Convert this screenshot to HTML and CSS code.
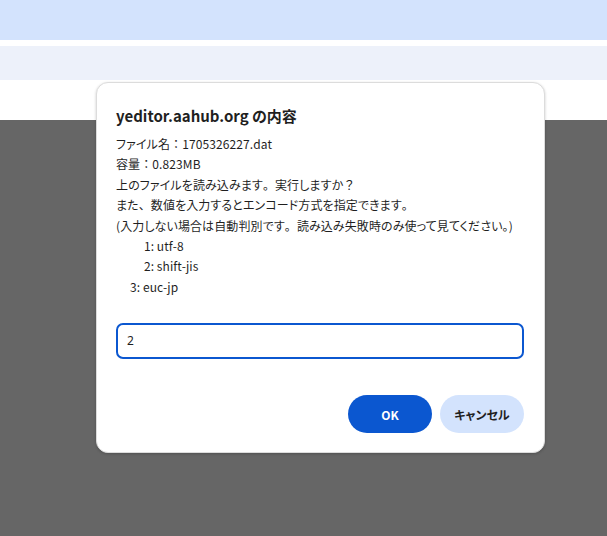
FILE: index.html
```html
<!DOCTYPE html>
<html lang="ja">
<head>
<meta charset="utf-8">
<link rel="stylesheet" href="styles.css">
</head>
<body>
<div class="page">
  <div class="bar-top"></div>
  <div class="bar-gap"></div>
  <div class="bar-second"></div>
  <div class="bar-white"></div>
  <div class="shade"></div>
</div>
<div class="dialog">
  <div class="title">yeditor.aahub.org の内容</div>
  <div class="message">ファイル名<span class="fw">：</span>1705326227.dat
容量<span class="fw">：</span>0.823MB
上のファイルを読み込みます<span class="fw">。</span>実行しますか<span class="fw">？</span>
また<span class="fw">、</span>数値を入力するとエンコード方式を指定できます<span class="fw">。</span>
(入力しない場合は自動判別です<span class="fw">。</span>読み込み失敗時のみ使って見てください<span class="fw">。</span>)
          1: utf-8
          2: shift-jis
     3: euc-jp</div>
  <div class="input">2</div>
  <div class="buttons">
    <div class="btn btn-ok">OK</div>
    <div class="btn btn-cancel">キャンセル</div>
  </div>
</div>
</body>
</html>
```
FILE: styles.css
```css
html, body {
  margin: 0;
  padding: 0;
  height: 100%;
}
body {
  font-family: "Noto Sans CJK JP", "Noto Sans", sans-serif;
  color: #1f1f1f;
}
.page {
  display: flex;
  flex-direction: column;
  height: 536px;
}
.bar-top { height: 40px; background: #d3e3fd; }
.bar-gap { height: 6px; background: #ffffff; }
.bar-second { height: 34px; background: #edf1fa; }
.bar-white { height: 40px; background: #ffffff; }
.shade { flex: 1; background: #666666; }

.dialog {
  position: absolute;
  left: 96px;
  top: 82px;
  width: 449px;
  height: 371px;
  box-sizing: border-box;
  background: #ffffff;
  border: 1px solid #dcdcdc;
  border-radius: 12px;
  box-shadow: 0 1px 3px rgba(0,0,0,0.2);
  padding: 23px 20px 19px 19px;
  display: flex;
  flex-direction: column;
}
.title {
  font-size: 15px;
  font-weight: 700;
  line-height: 20px;
  color: #1f1f1f;
  font-feature-settings: "palt";
}
.message {
  margin-top: 8px;
  font-size: 12px;
  line-height: 20.4px;
  white-space: pre;
  font-feature-settings: "palt";
  letter-spacing: 0.1px;
  color: #1f1f1f;
}
.fw {
  font-feature-settings: normal;
}
.input {
  margin-top: 26px;
  height: 36px;
  box-sizing: border-box;
  border: 2px solid #0b57d0;
  border-radius: 7px;
  padding: 0 9px;
  font-size: 12px;
  line-height: 32px;
  font-family: "Noto Sans", sans-serif;
  color: #1f1f1f;
}
.buttons {
  margin-top: auto;
  display: flex;
  justify-content: flex-end;
  gap: 8px;
}
.btn {
  width: 84px;
  height: 38px;
  border-radius: 19px;
  display: flex;
  align-items: center;
  justify-content: center;
  font-size: 12px;
  font-weight: 700;
  font-feature-settings: "palt";
}
.btn-ok { background: #0b57d0; color: #ffffff; }
.btn-cancel { background: #d3e3fd; color: #1f1f1f; }
```
